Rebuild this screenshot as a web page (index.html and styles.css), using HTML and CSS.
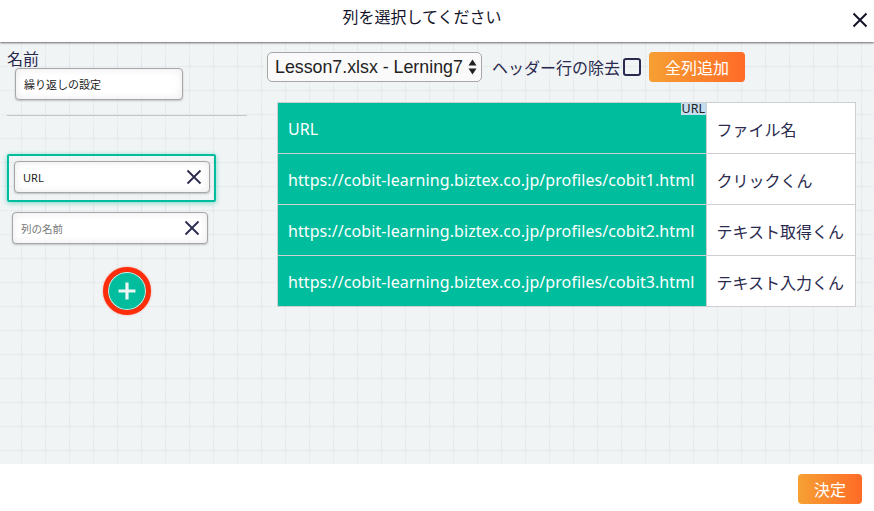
FILE: index.html
```html
<!DOCTYPE html>
<html lang="ja">
<head>
<meta charset="utf-8">
<title>列を選択してください</title>
<link rel="stylesheet" href="styles.css">
</head>
<body>
<div class="modal">
  <header class="top">
    <h1 class="title">列を選択してください</h1>
    <svg class="close" width="16" height="16" viewBox="0 0 16 16"><path d="M1.5 1.5 14.5 14.5M14.5 1.5 1.5 14.5" stroke="#14142b" stroke-width="2" fill="none"/></svg>
  </header>
  <main class="main">
    <aside class="side">
      <div class="name-label">名前</div>
      <div class="field name-field"><span>繰り返しの設定</span></div>
      <hr class="rule">
      <div class="selected-col">
        <div class="field col-field"><span class="val">URL</span>
          <svg class="x" width="16" height="16" viewBox="0 0 16 16"><path d="M1.5 1.5 14.5 14.5M14.5 1.5 1.5 14.5" stroke="#2a2a4e" stroke-width="1.8" fill="none"/></svg>
        </div>
      </div>
      <div class="field col-field second"><span class="ph">列の名前</span>
        <svg class="x" width="16" height="16" viewBox="0 0 16 16"><path d="M1.5 1.5 14.5 14.5M14.5 1.5 1.5 14.5" stroke="#2a2a4e" stroke-width="1.8" fill="none"/></svg>
      </div>
      <div class="add-wrap">
        <div class="add"><svg width="20" height="20" viewBox="0 0 20 20"><path d="M10 1.5V18.5M1.5 10H18.5" stroke="#eef6f4" stroke-width="3.2" fill="none"/></svg></div>
      </div>
    </aside>
    <section class="content">
      <div class="toolbar">
        <div class="select">
          <span class="select-text">Lesson7.xlsx - Lerning7</span>
          <svg class="arrows" width="9" height="16" viewBox="0 0 9 16"><path d="M4.5 0.5 8.5 6.5H0.5ZM4.5 15.5 0.5 9.5H8.5Z" fill="#222"/></svg>
        </div>
        <span class="hdr-label">ヘッダー行の除去</span>
        <span class="check"></span>
        <button class="btn all">全列追加</button>
      </div>
      <table class="sheet">
        <tr><td class="c1 head">URL<span class="tag">URL</span></td><td class="c2">ファイル名</td></tr>
        <tr><td class="c1">https://cobit-learning.biztex.co.jp/profiles/cobit1.html</td><td class="c2">クリックくん</td></tr>
        <tr><td class="c1">https://cobit-learning.biztex.co.jp/profiles/cobit2.html</td><td class="c2">テキスト取得くん</td></tr>
        <tr><td class="c1">https://cobit-learning.biztex.co.jp/profiles/cobit3.html</td><td class="c2">テキスト入力くん</td></tr>
      </table>
    </section>
  </main>
  <footer class="bottom"><button class="btn ok">決定</button></footer>
</div>
</body>
</html>
```
FILE: styles.css
```css
* { box-sizing: border-box; }
html, body { margin: 0; padding: 0; }
body {
  width: 874px;
  height: 511px;
  overflow: hidden;
  background: #fff;
  color: #2a2a4e;
  font-family: "Noto Sans", "Noto Sans CJK JP", sans-serif;
}
.modal { display: flex; flex-direction: column; height: 511px; }
.top {
  height: 42px;
  flex: none;
  position: relative;
  z-index: 2;
  background: #fff;
  box-shadow: 0 1px 2px rgba(0,0,0,.55);
  display: flex;
  justify-content: center;
  padding: 6px 30px 0 0;
}
.title { margin: 0; font-size: 16px; font-weight: 400; line-height: 22px; color: #14142b; }
.close { position: absolute; left: 852px; top: 12px; }
.main {
  flex: none;
  height: 422px;
  display: flex;
  background-color: #f0f4f5;
  background-image: url("data:image/svg+xml,%3Csvg xmlns='http://www.w3.org/2000/svg' width='24' height='24'%3E%3Cpath d='M.5 0V24M0 .5H24' stroke='%23dfe3e5' stroke-dasharray='1 1' fill='none'/%3E%3Cpath d='M.5 0V3M.5 21V24M0 .5H3M21 .5H24' stroke='%23e3e7e9' fill='none'/%3E%3C/svg%3E");
  background-size: 24px 24px;
  background-position: 21px 0;
}
.side { width: 255px; flex: none; padding: 9px 0 0 7px; }
.name-label { font-size: 16px; line-height: 17px; height: 17px; }
.field {
  display: flex;
  align-items: center;
  background: #fff;
  border: 1px solid #a6a6a6;
  border-radius: 4px;
  box-shadow: inset 0 0 8px rgba(0,0,0,.09), 0 1px 2px rgba(0,0,0,.2);
  font-size: 11px;
  color: #222;
}
.name-field { width: 168px; height: 32px; margin-left: 8px; padding-left: 8px; }
.rule { width: 240px; margin: 15px 0 0 0; border: 0; border-top: 1px solid #c4c6c9; }
.selected-col {
  width: 209px;
  height: 48px;
  margin-top: 38px;
  border: 2px solid #00bd9d;
  border-radius: 2px;
  padding: 5px 5px 0 5px;
  box-shadow: 0 1px 5px rgba(0,189,157,.5);
}
.col-field { width: 196px; height: 32px; padding: 0 7px 0 8px; justify-content: space-between; }
.second { margin: 10px 0 0 5px; }
.ph { color: #777; font-size: 10.5px; }
.x { flex: none; }
.add-wrap { width: 240px; display: flex; justify-content: center; margin-top: 23px; }
.add {
  width: 48px;
  height: 48px;
  border-radius: 50%;
  background: #00bd9d;
  border: 5px solid #ff2d0a;
  box-shadow: inset 0 0 0 1px #d9efea, 0 0 2px rgba(255,45,10,.5);
  display: flex;
  align-items: center;
  justify-content: center;
}
.content { flex: 1; padding: 10px 0 0 12px; }
.toolbar { display: flex; align-items: center; height: 30px; }
.select {
  width: 215px;
  height: 30px;
  background: #fafafa;
  border: 1px solid #a6a6a6;
  border-radius: 5px;
  display: flex;
  align-items: center;
  justify-content: space-between;
  padding: 0 4px 0 7px;
  font-family: "Liberation Sans", sans-serif;
  font-size: 17.8px;
  color: #222;
  white-space: nowrap;
}
.hdr-label { margin-left: 10px; font-size: 16px; white-space: nowrap; }
.check { width: 18px; height: 18px; margin-left: 3px; border: 2px solid #2a2a4e; border-radius: 3px; flex: none; }
.btn {
  border: 0;
  border-radius: 4px;
  background: linear-gradient(to right, #f6a033, #ff6b27);
  color: #fff;
  font: inherit;
  font-size: 16px;
  padding: 0;
}
.all { width: 96px; height: 30px; margin-left: 8px; }
.sheet {
  margin: 20px 0 0 10px;
  border-collapse: collapse;
  table-layout: fixed;
  width: 579px;
}
.sheet td {
  height: 51px;
  border: 1px solid #cdcfd0;
  padding: 1px 10px 0;
  font-size: 16px;
  white-space: nowrap;
}
.c1 { width: 429px; background: #00bd9d; color: #fff; position: relative; letter-spacing: .08px; }
.sheet .c2 { background: #fff; padding-left: 9.5px; }
.tag {
  position: absolute;
  right: 0;
  top: 0;
  background: #c5deef;
  color: #222;
  font-size: 12.5px;
  line-height: 12px;
  padding: 0 1px;
  letter-spacing: 0;
}
.bottom { flex: 1; background: #fff; display: flex; justify-content: flex-end; align-items: flex-start; padding: 10px 12px 0 0; }
.ok { width: 64px; height: 30px; }
```
